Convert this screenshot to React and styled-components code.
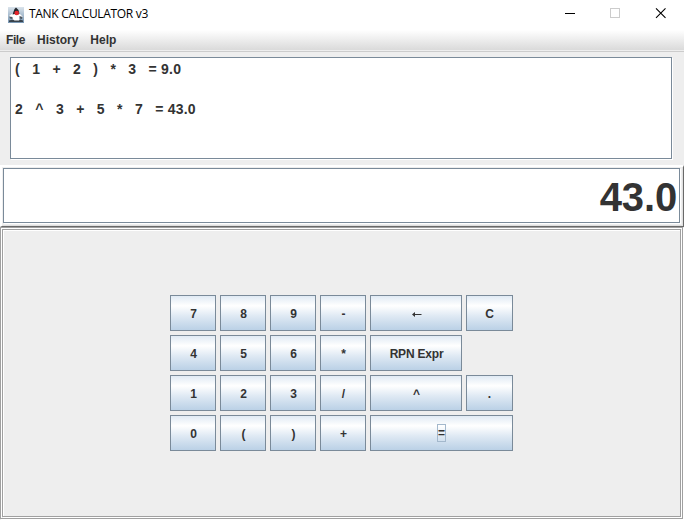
import React from "react";
import styled, { createGlobalStyle } from "styled-components";

const GlobalStyle = createGlobalStyle`
  * { box-sizing: border-box; }
  body { margin: 0; background: #fff; }
`;

const Window = styled.div`
  width: 684px;
  height: 520px;
  display: flex;
  flex-direction: column;
  overflow: hidden;
  background: #eee;
  color: #333;
  font-family: "Liberation Sans", Arial, sans-serif;
  font-weight: bold;
`;

const TitleBar = styled.header`
  height: 30px;
  flex: none;
  display: flex;
  align-items: center;
  padding-left: 8px;
  background: #fff;
`;

const Title = styled.h1`
  flex: 1;
  margin: 0 0 0 5px;
  padding-bottom: 2px;
  color: #000;
  font: 400 12px/16px "Open Sans", sans-serif;
  letter-spacing: -0.31px;
`;

const Controls = styled.svg`
  display: block;
  flex: none;
`;

const MenuBar = styled.nav`
  height: 22px;
  flex: none;
  display: flex;
  gap: 12px;
  padding: 0 6px;
  border-bottom: 1px solid #ccc;
  background: linear-gradient(#fff 0, #dadada 20px, #eee 20px);
  font-size: 12px;
  line-height: 20px;
`;

const MenuItem = styled.span`
  letter-spacing: ${(p) => p.$spacing}px;
`;

const Field = styled.div`
  border: 1px solid #7a8a99;
  background: #fff;
  box-shadow: 1px 1px 0 #fff;
`;

const History = styled(Field)`
  height: 102px;
  flex: none;
  margin: 5px 12px 6px 10px;
  padding: 1px 4px;
  font-size: 14px;
  line-height: 20px;
`;

const HistoryLine = styled.div`
  height: 20px;
  white-space: pre;
  letter-spacing: 0.2px;
`;

const DisplayPanel = styled.section`
  height: 62px;
  flex: none;
  padding: 1px 3px 2px 1px;
  border: solid;
  border-width: 2px 1px 1px 2px;
  border-color: #fff #696969 #696969 #fff;
  box-shadow: inset -1px -1px 0 #e0e0e0;
`;

const Display = styled(Field)`
  height: 55px;
  padding: 1px 2px 0 0;
  text-align: right;
  font-size: 40px;
  line-height: 55px;
  letter-spacing: -0.15px;
`;

const Etched = styled.div`
  border: 1px solid #a0a0a0;
  box-shadow: 1px 1px 0 #fff, inset 1px 1px 0 #fff;
`;

const KeypadPanel = styled(Etched)`
  flex: 1;
  display: flex;
  margin: 0 1px 1px 0;
  padding: 1px;
`;

const KeypadInner = styled(Etched)`
  flex: 1;
  display: flex;
  justify-content: center;
  align-items: center;
`;

const Keypad = styled.div`
  display: grid;
  grid-template-columns: repeat(4, 46px) 92px 47px;
  grid-auto-rows: 36px;
  gap: 4px;
`;

const Key = styled.button`
  grid-column: span ${(p) => p.$span || 1};
  display: flex;
  align-items: center;
  justify-content: center;
  padding: ${(p) => (p.$span ? "0" : p.$last ? "2px 0 0" : "2px 0 0 1px")};
  border: 1px solid #7a8a99;
  border-radius: 0;
  background: linear-gradient(#dde8f3, #fff 30%, #dde8f3 60%, #b8cfe5) border-box;
  color: #333;
  font: bold 12px/16px "Liberation Sans", Arial, sans-serif;
  letter-spacing: ${(p) => (p.$tight ? "-0.2px" : "0")};
`;

const Blank = styled.span``;

const FocusRing = styled.span`
  width: 9px;
  height: 18px;
  display: flex;
  align-items: center;
  justify-content: center;
  border: 1px solid #a3b8cc;
`;

function DukeIcon() {
  return (
    <svg width="16" height="16" viewBox="0 0 16 16">
      <defs>
        <linearGradient id="sky" x1="0" y1="0" x2="0" y2="1">
          <stop offset="0" stopColor="#dbe4ec" />
          <stop offset="1" stopColor="#7796b3" />
        </linearGradient>
      </defs>
      <rect width="16" height="16" fill="url(#sky)" />
      <path d="M5.5 6 1.5 8.5v2l3 .5v3h7v-3l3-.5v-1L11 6z" fill="#fff" />
      <path d="M8 .5 6.5 2 4.5 7.5 7 7l1 .7L11.5 7l-1-4z" fill="#252a30" />
      <path d="M1 9.5 4.5 10v2L2 11.5zM11.5 9l3 1-.5 2-2.5-.5z" fill="#4b5661" />
      <path d="M1 13.5 5 12.5l1.5 1H11l1-1 3 1v1.5H1z" fill="#39434d" />
      <circle cx="8.7" cy="6" r="2.3" fill="#e5262b" />
    </svg>
  );
}

function WindowControls() {
  return (
    <Controls width="124" height="30" viewBox="0 0 124 30" shapeRendering="crispEdges">
      <rect x="5" y="13" width="10" height="1" fill="#000" />
      <rect x="50.5" y="8.5" width="9" height="9" fill="none" stroke="#ccc" />
      <path
        d="M96 8.3 105.5 17.8M105.5 8.3 96 17.8"
        stroke="#000"
        strokeWidth="1.1"
        shapeRendering="auto"
      />
    </Controls>
  );
}

function BackArrow() {
  return (
    <svg width="10" height="7" viewBox="0 0 10 7">
      <path d="M0 3.5 3 1v2h6.5v1H3v2z" fill="#333" />
    </svg>
  );
}

const MENUS = [
  { label: "File", spacing: -0.4 },
  { label: "History", spacing: -0.02 },
  { label: "Help", spacing: 0 },
];

const KEYS = [
  ["7"], ["8"], ["9"], ["-"], ["←"], ["C"],
  ["4"], ["5"], ["6"], ["*"], ["RPN Expr"], null,
  ["1"], ["2"], ["3"], ["/"], ["^"], ["."],
  ["0"], ["("], [")"], ["+"], ["=", 2],
];

function keyFace(label) {
  if (label === "←") return <BackArrow />;
  if (label === "=") return <FocusRing>=</FocusRing>;
  return label;
}

export default function App() {
  return (
    <Window>
      <GlobalStyle />
      <TitleBar>
        <DukeIcon />
        <Title>TANK CALCULATOR v3</Title>
        <WindowControls />
      </TitleBar>
      <MenuBar>
        {MENUS.map((menu) => (
          <MenuItem key={menu.label} $spacing={menu.spacing}>
            {menu.label}
          </MenuItem>
        ))}
      </MenuBar>
      <History>
        <HistoryLine>{"(   1   +   2   )   *   3   = 9.0"}</HistoryLine>
        <HistoryLine />
        <HistoryLine>{"2   ^   3   +   5   *   7   = 43.0"}</HistoryLine>
      </History>
      <DisplayPanel>
        <Display>43.0</Display>
      </DisplayPanel>
      <KeypadPanel>
        <KeypadInner>
          <Keypad>
            {KEYS.map((key, i) =>
              key ? (
                <Key
                  key={i}
                  $span={key[1]}
                  $last={i % 6 === 5}
                  $tight={key[0].length > 1}
                  aria-label={key[0]}
                >
                  {keyFace(key[0])}
                </Key>
              ) : (
                <Blank key={i} />
              )
            )}
          </Keypad>
        </KeypadInner>
      </KeypadPanel>
    </Window>
  );
}
